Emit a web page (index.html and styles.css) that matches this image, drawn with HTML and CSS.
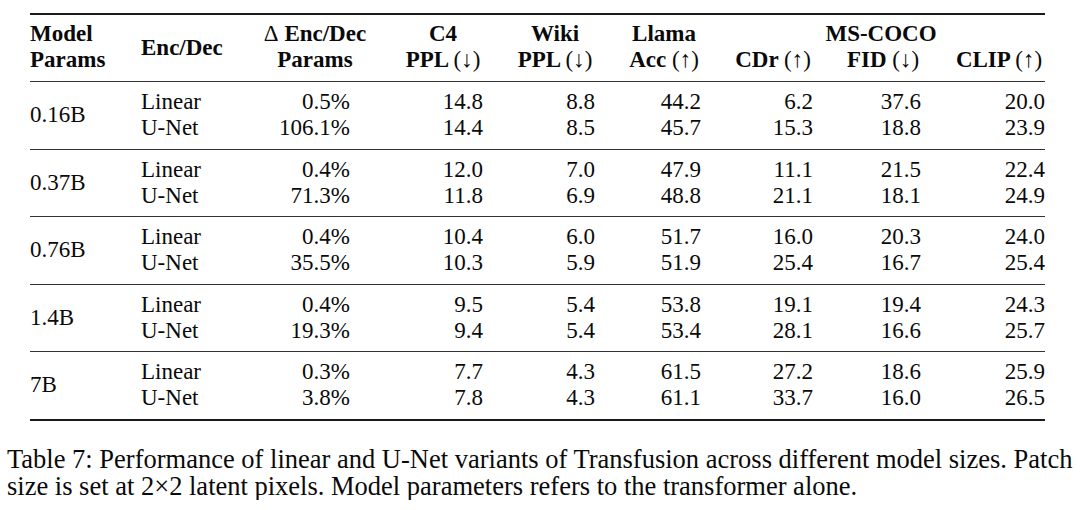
FILE: index.html
```html
<!DOCTYPE html>
<html lang="en">
<head>
<meta charset="utf-8">
<title>Table 7</title>
<link rel="stylesheet" href="styles.css">
</head>
<body>
<figure class="fig">
  <table class="results">
    <colgroup>
      <col class="w-size"><col class="w-enc"><col class="w-delta"><col class="w-c4"><col class="w-wiki"><col class="w-llama"><col class="w-cdr"><col class="w-fid"><col class="w-clip">
    </colgroup>
    <thead>
      <tr class="h1">
        <th class="left">Model</th>
        <th class="left mid" rowspan="2">Enc/Dec</th>
        <th><span class="math">Δ</span> Enc/Dec</th>
        <th>C4</th>
        <th>Wiki</th>
        <th>Llama</th>
        <th colspan="3">MS-COCO</th>
      </tr>
      <tr class="h2">
        <th class="left">Params</th>
        <th>Params</th>
        <th>PPL <span class="arrow">(↓)</span></th>
        <th>PPL <span class="arrow">(↓)</span></th>
        <th>Acc <span class="arrow">(↑)</span></th>
        <th>CDr <span class="arrow">(↑)</span></th>
        <th>FID <span class="arrow">(↓)</span></th>
        <th>CLIP <span class="arrow">(↑)</span></th>
      </tr>
    </thead>
    <tbody>
      <tr class="ra"><td class="size" rowspan="2">0.16B</td><td class="left">Linear</td><td class="pct">0.5%</td><td>14.8</td><td>8.8</td><td>44.2</td><td>6.2</td><td>37.6</td><td>20.0</td></tr>
      <tr class="rb"><td class="left">U-Net</td><td class="pct">106.1%</td><td>14.4</td><td>8.5</td><td>45.7</td><td>15.3</td><td>18.8</td><td>23.9</td></tr>
    </tbody>
    <tbody>
      <tr class="ra"><td class="size" rowspan="2">0.37B</td><td class="left">Linear</td><td class="pct">0.4%</td><td>12.0</td><td>7.0</td><td>47.9</td><td>11.1</td><td>21.5</td><td>22.4</td></tr>
      <tr class="rb"><td class="left">U-Net</td><td class="pct">71.3%</td><td>11.8</td><td>6.9</td><td>48.8</td><td>21.1</td><td>18.1</td><td>24.9</td></tr>
    </tbody>
    <tbody>
      <tr class="ra"><td class="size" rowspan="2">0.76B</td><td class="left">Linear</td><td class="pct">0.4%</td><td>10.4</td><td>6.0</td><td>51.7</td><td>16.0</td><td>20.3</td><td>24.0</td></tr>
      <tr class="rb"><td class="left">U-Net</td><td class="pct">35.5%</td><td>10.3</td><td>5.9</td><td>51.9</td><td>25.4</td><td>16.7</td><td>25.4</td></tr>
    </tbody>
    <tbody>
      <tr class="ra"><td class="size" rowspan="2">1.4B</td><td class="left">Linear</td><td class="pct">0.4%</td><td>9.5</td><td>5.4</td><td>53.8</td><td>19.1</td><td>19.4</td><td>24.3</td></tr>
      <tr class="rb"><td class="left">U-Net</td><td class="pct">19.3%</td><td>9.4</td><td>5.4</td><td>53.4</td><td>28.1</td><td>16.6</td><td>25.7</td></tr>
    </tbody>
    <tbody>
      <tr class="ra"><td class="size" rowspan="2">7B</td><td class="left">Linear</td><td class="pct">0.3%</td><td>7.7</td><td>4.3</td><td>61.5</td><td>27.2</td><td>18.6</td><td>25.9</td></tr>
      <tr class="rb"><td class="left">U-Net</td><td class="pct">3.8%</td><td>7.8</td><td>4.3</td><td>61.1</td><td>33.7</td><td>16.0</td><td>26.5</td></tr>
    </tbody>
  </table>
  <figcaption class="caption">Table 7: Performance of linear and U-Net variants of Transfusion across different model sizes. Patch size is set at 2×2 latent pixels. Model parameters refers to the transformer alone.</figcaption>
</figure>
</body>
</html>
```

FILE: styles.css
```css
* {
  box-sizing: border-box;
}

html,
body {
  margin: 0;
  background: #ffffff;
}

body {
  font-family: "Liberation Serif", "Times New Roman", serif;
  color: #0a0a0a;
}

.fig {
  margin: 0;
  padding: 13px 4px 0 7px;
}

.results {
  margin-left: 23px;
  width: 1015px;
  table-layout: fixed;
  border-collapse: collapse;
  font-size: 23px;
  line-height: 26px;
  border-top: 2px solid #1a1a1a;
  border-bottom: 2px solid #1a1a1a;
}

.w-size { width: 95px; }
.w-enc { width: 118px; }
.w-delta { width: 144px; }
.w-c4 { width: 112px; }
.w-wiki { width: 112px; }
.w-llama { width: 106px; }
.w-cdr { width: 112px; }
.w-fid { width: 108px; }
.w-clip { width: 108px; }

.results thead {
  border-bottom: 1px solid #333333;
}

.results tbody {
  border-bottom: 1px solid #333333;
}

.results th,
.results td {
  padding: 0 16px;
  white-space: nowrap;
}

.results th {
  font-weight: bold;
  text-align: center;
  vertical-align: baseline;
}

.results td {
  font-weight: normal;
  text-align: right;
  vertical-align: baseline;
}

.results .left {
  text-align: left;
}

.results .mid {
  vertical-align: middle;
  padding-top: 0;
  padding-bottom: 0;
}

.h1 th {
  padding-top: 6px;
}

.h2 th {
  padding-bottom: 8px;
}

.results .h1 th:first-child,
.results .h2 th:first-child,
.results .size {
  padding-left: 0;
  text-align: left;
}

.results .h2 th:last-child,
.results td:last-child {
  padding-right: 0;
}

.math,
.arrow {
  font-weight: normal;
}

.ra td {
  padding-top: 7px;
}

.rb td {
  padding-bottom: 7.5px;
}

.results .size {
  vertical-align: middle;
  padding-top: 7px;
  padding-bottom: 7.5px;
}

.results .pct {
  padding-right: 37px;
}

.caption {
  margin: 25px 0 0 0;
  font-size: 26.5px;
  line-height: 27px;
}
```
